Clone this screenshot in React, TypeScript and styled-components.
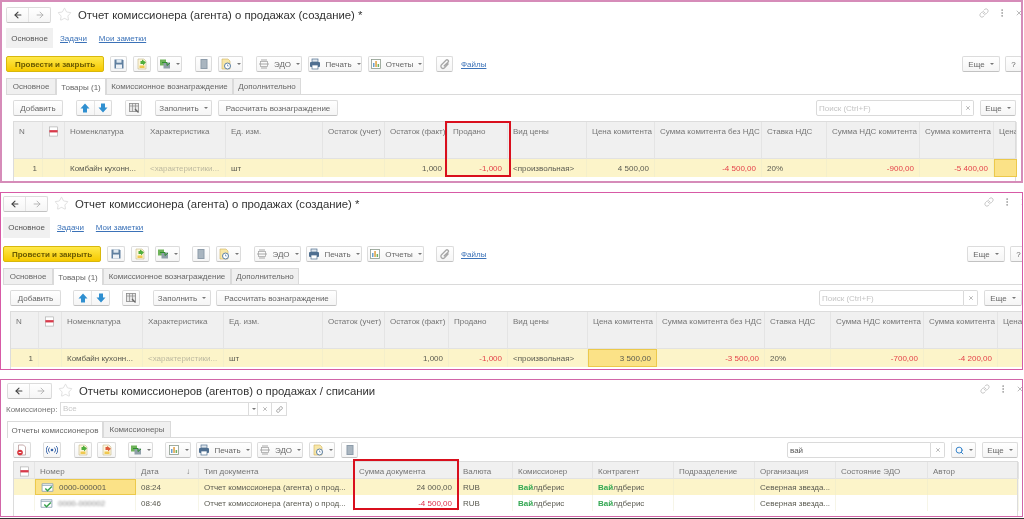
import React from "react";
import styled, { createGlobalStyle } from "styled-components";
import { ArrowLeft, ArrowRight, Star, Link as LinkIcon, MoreVertical, X, Search } from "lucide-react";

const Global = createGlobalStyle`
  html, body { margin: 0; padding: 0; background: #fff; }
  body { font-family: "Liberation Sans", Arial, sans-serif; color: #555; }
`;

const Page = styled.div`
  width: 1024px;
  height: 519px;
  overflow: hidden;
  background: #fff;
  display: flex;
  flex-direction: column;
  border-bottom: 1px solid #333;
  box-sizing: border-box;
  filter: blur(0.5px);
`;

const Panel = styled.section<{ $h: number; $mt: number; $x: number; $border: string; $top: number; $bw: number }>`
  position: relative;
  box-sizing: border-box;
  flex: none;
  width: 1023px;
  height: ${(p) => p.$h}px;
  margin-top: ${(p) => p.$mt}px;
  padding: ${(p) => p.$top}px 0 0 ${(p) => p.$x}px;
  border: ${(p) => p.$bw}px solid ${(p) => p.$border};
  overflow: hidden;
`;

const HeadRow = styled.div`
  display: flex;
  align-items: center;
  height: 15px;
  width: 1015px;
  position: relative;
`;

const Split = styled.div<{ $w: number; $ml?: number }>`
  flex: none;
  display: flex;
  box-sizing: border-box;
  width: ${(p) => p.$w}px;
  height: 16px;
  margin-left: ${(p) => p.$ml ?? 0}px;
  border: 1px solid #dcdcdc;
  border-bottom-color: #c2c2c2;
  border-radius: 2px;
  background: linear-gradient(#fff, #f5f5f5);
  & > span {
    flex: 1;
    display: flex;
    align-items: center;
    justify-content: center;
  }
  & > span + span { border-left: 1px solid #e4e4e4; }
`;

const Title = styled.h1`
  margin: 0 0 0 6px;
  font-size: 11.35px;
  font-weight: 400;
  color: #333;
  white-space: nowrap;
`;

const FavStar = styled(Star)`
  flex: none;
  margin-left: 6px;
`;

const WindowIcons = styled.div<{ $right: number }>`
  position: absolute;
  right: ${(p) => p.$right}px;
  top: 1px;
  display: flex;
  align-items: center;
  gap: 8px;
  color: #999;
`;

const SubTabs = styled.nav<{ $h: number }>`
  display: flex;
  align-items: center;
  height: ${(p) => p.$h}px;
  margin-top: 6px;
  font-size: 8px;
`;

const SubActive = styled.span`
  display: flex;
  align-items: center;
  justify-content: center;
  width: 47px;
  height: 100%;
  background: #f0f0f0;
  color: #555;
`;

const LinkText = styled.a<{ $ml: number }>`
  margin-left: ${(p) => p.$ml}px;
  color: #3b72b8;
  text-decoration: underline;
  font-size: 8px;
  white-space: nowrap;
`;

const Toolbar = styled.div<{ $w: number; $mt?: number; $ml?: number }>`
  display: flex;
  align-items: center;
  box-sizing: border-box;
  height: 16px;
  width: ${(p) => p.$w}px;
  margin-top: ${(p) => p.$mt ?? 8}px;
  margin-left: ${(p) => p.$ml ?? 0}px;
`;

const Tool = styled.button<{ $w: number; $ml?: number; $auto?: boolean }>`
  flex: none;
  display: flex;
  align-items: center;
  justify-content: center;
  gap: 4px;
  box-sizing: border-box;
  width: ${(p) => p.$w}px;
  height: 16px;
  margin: 0;
  margin-left: ${(p) => (p.$auto ? "auto" : `${p.$ml ?? 0}px`)};
  padding: 0;
  border: 1px solid #dcdcdc;
  border-bottom-color: #c2c2c2;
  border-radius: 2px;
  background: linear-gradient(#fff, #f5f5f5);
  color: #666;
  font: 400 8px "Liberation Sans", Arial, sans-serif;
  white-space: nowrap;
`;

const PrimaryBtn = styled.button`
  flex: none;
  width: 98px;
  height: 16px;
  padding: 0;
  box-sizing: border-box;
  border: 1px solid #d8b80c;
  border-radius: 2px;
  background: linear-gradient(#ffe94a, #f6c900);
  color: #6a5a00;
  font: 700 8px "Liberation Sans", Arial, sans-serif;
  white-space: nowrap;
`;

const Caret = styled.i`
  display: block;
  width: 0;
  height: 0;
  margin-left: 1px;
  border: 2px solid transparent;
  border-top: 2.5px solid #777;
  border-bottom: 0;
`;

const Tabs = styled.div<{ $mt: number }>`
  display: flex;
  height: 16px;
  margin-top: ${(p) => p.$mt}px;
  margin-right: -20px;
  border-bottom: 1px solid #dadada;
  box-sizing: content-box;
`;

const TabItem = styled.div<{ $w: number; $active?: boolean }>`
  flex: none;
  display: flex;
  align-items: center;
  justify-content: center;
  box-sizing: border-box;
  width: ${(p) => p.$w}px;
  height: ${(p) => (p.$active ? 17 : 16)}px;
  font-size: 8px;
  white-space: nowrap;
  color: #666;
  background: ${(p) => (p.$active ? "#fff" : "#f0f0f0")};
  border: 1px solid #dadada;
  border-bottom: 0;
`;

const SearchField = styled.div<{ $w: number; $ghost?: boolean }>`
  flex: none;
  display: flex;
  align-items: center;
  box-sizing: border-box;
  width: ${(p) => p.$w}px;
  height: 16px;
  margin-left: auto;
  padding-left: 2px;
  border: 1px solid #dadada;
  border-radius: 2px 0 0 2px;
  background: #fff;
  font-size: 8px;
  color: ${(p) => (p.$ghost ? "#c4c4c4" : "#555")};
`;

const ClearBtn = styled.span<{ $w: number }>`
  flex: none;
  display: flex;
  align-items: center;
  justify-content: center;
  box-sizing: border-box;
  width: ${(p) => p.$w}px;
  height: 16px;
  border: 1px solid #dadada;
  border-left: 0;
  border-radius: 0 2px 2px 0;
  color: #777;
`;

const Table = styled.div<{ $w: number; $mt: number; $ml: number }>`
  box-sizing: border-box;
  width: ${(p) => p.$w}px;
  height: 100px;
  margin-top: ${(p) => p.$mt}px;
  margin-left: ${(p) => p.$ml}px;
  border-left: 1px solid #dcdcdc;
  border-right: 1px solid #dcdcdc;
  border-top: 1px solid #dcdcdc;
`;

const GridRow = styled.div<{ $cols: string; $h: number; $bg: string }>`
  display: grid;
  grid-template-columns: ${(p) => p.$cols};
  height: ${(p) => p.$h}px;
  background: ${(p) => p.$bg};
  font-size: 8px;
`;

const HeadCell = styled.div`
  box-sizing: border-box;
  padding: 4px 0 0 5px;
  border-right: 1px solid #e4e4e4;
  border-bottom: 1px solid #e2e2e2;
  line-height: 11px;
  color: #757575;
  white-space: nowrap;
  overflow: hidden;
  display: flex;
  justify-content: space-between;
  align-items: flex-start;
`;

const Cell = styled.div<{ $right?: boolean; $color?: string; $focus?: boolean }>`
  box-sizing: border-box;
  display: flex;
  align-items: center;
  gap: 5px;
  justify-content: ${(p) => (p.$right ? "flex-end" : "flex-start")};
  padding: 0 5px;
  white-space: nowrap;
  overflow: hidden;
  color: ${(p) => p.$color ?? "#5a5a50"};
  background: ${(p) => (p.$focus ? "#fbe287" : "transparent")};
  border: ${(p) => (p.$focus ? "1px solid #ecc94b" : "0")};
  border-right: ${(p) => (p.$focus ? "1px solid #ecc94b" : "1px solid rgba(235,232,205,.45)")};
`;

const Match = styled.b`
  color: #34a853;
  font-weight: 700;
`;

const Smudged = styled.span`
  filter: blur(1.1px);
  color: #888;
`;

const FilterRow = styled.div`
  display: flex;
  align-items: center;
  height: 14px;
  margin-top: 4px;
  margin-left: -1px;
  font-size: 8px;
  color: #777;
`;

const FilterLabel = styled.span`
  flex: none;
  width: 54px;
`;

const FilterInput = styled.div`
  box-sizing: border-box;
  width: 189px;
  height: 14px;
  padding-left: 2px;
  border: 1px solid #dcdcdc;
  line-height: 12px;
  color: #c8c8c8;
`;

const FilterBtn = styled.span<{ $w: number }>`
  display: flex;
  align-items: center;
  justify-content: center;
  box-sizing: border-box;
  width: ${(p) => p.$w}px;
  height: 14px;
  border: 1px solid #dcdcdc;
  border-left: 0;
  color: #777;
`;

const RedBox = styled.div<{ $x: number; $y: number; $w: number; $h: number }>`
  position: absolute;
  left: ${(p) => p.$x}px;
  top: ${(p) => p.$y}px;
  width: ${(p) => p.$w}px;
  height: ${(p) => p.$h}px;
  box-sizing: border-box;
  border: 2px solid #d90f1d;
  pointer-events: none;
`;

const DateSort = styled.span`
  margin-right: 8px;
`;

const Svg = ({ children, s = 12 }: { children: React.ReactNode; s?: number }) => (
  <svg width={s} height={s} viewBox="0 0 12 12" fill="none">{children}</svg>
);

const icons: Record<string, React.ReactNode> = {
  save: (
    <Svg>
      <path d="M1.5 1.5h8l1 1v8h-9z" fill="#5f7f9f" />
      <rect x="3.5" y="1.5" width="5" height="3.2" fill="#dfe8f0" />
      <rect x="3" y="6.5" width="6" height="4" fill="#eef2f6" />
    </Svg>
  ),
  docGreen: (
    <Svg>
      <path d="M2 1h6l2 2v8H2z" fill="#fdf6da" stroke="#c7b98a" strokeWidth=".6" />
      <path d="M6 1.5l4 2.8L7 7.500V6H4.500V3H6z" fill="#4fae3c" />
      <rect x="3.500" y="7.500" width="5" height="2.500" fill="#f0c850" />
    </Svg>
  ),
  docRed: (
    <Svg>
      <path d="M2 1h6l2 2v8H2z" fill="#fdf6da" stroke="#c7b98a" strokeWidth=".6" />
      <path d="M6 2l4 2.800L7 7.500V6H4.500V3H6z" fill="#dd5a3a" />
      <rect x="3.500" y="7.500" width="5" height="2.500" fill="#f0c850" />
    </Svg>
  ),
  group: (
    <Svg>
      <rect x="1" y="1.500" width="6" height="6" fill="#6fb35a" />
      <rect x="4.500" y="4.500" width="6.500" height="6" fill="#8f9fa8" />
      <path d="M3 4.500h5v3l3-2.500" stroke="#2e8f2e" strokeWidth="1" />
    </Svg>
  ),
  list: (
    <Svg>
      <rect x="2.500" y="1" width="7" height="10" fill="#8d9caa" />
      <path d="M3.500 3h5M3.500 5h5M3.500 7h5M3.500 9h5" stroke="#dfe5ea" strokeWidth=".7" />
    </Svg>
  ),
  clock: (
    <Svg>
      <path d="M2 1h6l2 2v8H2z" fill="#f8e7a8" stroke="#d0b460" strokeWidth=".6" />
      <circle cx="7.500" cy="8" r="3" fill="#fff" stroke="#5b7fa5" />
      <path d="M7.500 6.500V8h1.200" stroke="#5b7fa5" strokeWidth=".7" />
    </Svg>
  ),
  edo: (
    <Svg>
      <path d="M3 2h6M1 6h10M3 10h6" stroke="#a8a8a8" strokeWidth="1" />
      <rect x="2.500" y="3.500" width="7" height="5" stroke="#a8a8a8" strokeWidth=".8" />
    </Svg>
  ),
  print: (
    <Svg>
      <rect x="3" y="1" width="6" height="3" fill="#dfe5ec" stroke="#4f6f90" strokeWidth=".7" />
      <rect x="1" y="4" width="10" height="5" rx="1" fill="#4f6f90" />
      <rect x="3" y="7" width="6" height="4" fill="#fff" stroke="#4f6f90" strokeWidth=".7" />
    </Svg>
  ),
  report: (
    <Svg>
      <rect x="1.500" y="1.500" width="9" height="9" fill="#fff" stroke="#8a9a8a" strokeWidth=".8" />
      <rect x="3" y="5" width="1.500" height="4" fill="#6a9fd0" />
      <rect x="5.300" y="3" width="1.500" height="6" fill="#e0a040" />
      <rect x="7.600" y="6" width="1.500" height="3" fill="#70b060" />
    </Svg>
  ),
  clip: (
    <Svg>
      <path d="M9.500 5.500L5.500 9.700a2 2 0 01-3-3L7 2.200a1.300 1.300 0 012 2L4.800 8.300" stroke="#a8a8a8" strokeWidth="1.300" />
    </Svg>
  ),
  table: (
    <Svg>
      <rect x="1.500" y="1.500" width="9" height="8" fill="#e8e8e8" stroke="#888" strokeWidth=".8" />
      <path d="M1.500 4h9M4.500 1.500v8M7.500 1.500v8" stroke="#888" strokeWidth=".7" />
      <path d="M7 7l3.500 3.500" stroke="#666" strokeWidth="1.200" />
    </Svg>
  ),
  del: (
    <Svg>
      <path d="M2.500 1h5l2 2v8h-7z" fill="#fff" stroke="#b08a8a" strokeWidth=".7" />
      <circle cx="4" cy="8.500" r="2.800" fill="#d9363e" />
      <path d="M2.700 8.500h2.600" stroke="#fff" strokeWidth=".9" />
    </Svg>
  ),
  radio: (
    <Svg>
      <circle cx="6" cy="6" r="1.300" fill="#3461a8" />
      <path d="M3.500 3.500a3.500 3.500 0 000 5M8.500 3.500a3.500 3.500 0 010 5M1.800 2a6 6 0 000 8M10.200 2a6 6 0 010 8" stroke="#3461a8" strokeWidth=".9" />
    </Svg>
  ),
  up: (
    <Svg>
      <path d="M6 1.500L10.500 6.500H8V10.500H4V6.500H1.500z" fill="#2f8fd0" />
    </Svg>
  ),
  down: (
    <Svg>
      <path d="M6 10.500L1.500 5.500H4V1.500H8V5.500H10.500z" fill="#2f8fd0" />
    </Svg>
  ),
  mark: (
    <Svg s={11}>
      <rect x="1.500" y="1" width="9" height="10" fill="#fff" stroke="#aaa" strokeWidth=".7" />
      <rect x="1.500" y="4.500" width="9" height="2.500" fill="#d83a4a" />
    </Svg>
  ),
  row: (
    <Svg s={13}>
      <path d="M1 2.500h10v7H1z" fill="#fff" stroke="#8fa3b2" strokeWidth=".8" />
      <path d="M1 4h10" stroke="#8fa3b2" strokeWidth=".8" />
      <path d="M4 7l2 2 4-4" stroke="#35a04a" strokeWidth="1.300" />
    </Svg>
  ),
};

type ToolDef = { w: number; ml?: number; icon?: string; label?: string; caret?: boolean; auto?: boolean };

const ToolButtons = ({ items }: { items: ToolDef[] }) => (
  <>
    {items.map((t, i) => (
      <Tool key={i} $w={t.w} $ml={t.ml} $auto={t.auto}>
        {t.icon && icons[t.icon]}
        {t.label}
        {t.caret && <Caret />}
      </Tool>
    ))}
  </>
);

const Header = ({ title, right }: { title: string; right: number }) => (
  <HeadRow>
    <Split $w={45}>
      <span><ArrowLeft size={10} strokeWidth={2.6} color="#444" /></span>
      <span><ArrowRight size={10} strokeWidth={2} color="#aaa" /></span>
    </Split>
    <FavStar size={15} strokeWidth={0.9} color="#c8c8c8" />
    <Title>{title}</Title>
    <WindowIcons $right={right}>
      <LinkIcon size={10} strokeWidth={1.3} />
      <MoreVertical size={10} strokeWidth={2} />
      <X size={8} />
    </WindowIcons>
  </HeadRow>
);

const SearchBox = ({ text, w, cw, ghost }: { text: string; w: number; cw: number; ghost?: boolean }) => (
  <>
    <SearchField $w={w} $ghost={ghost}>{text}</SearchField>
    <ClearBtn $w={cw}><X size={6} strokeWidth={2} /></ClearBtn>
  </>
);

const RED = "#e4424a";

type RowCell = { t?: React.ReactNode; right?: boolean; color?: string; focus?: boolean };

const DocTable = ({ cols, heads, rows, headH, rowH, w, mt, ml }: {
  cols: number[]; heads: React.ReactNode[]; rows: { bg: string; cells: RowCell[] }[]; headH: number; rowH: number; w: number; mt: number; ml: number;
}) => {
  const tpl = cols.map((c) => `${c}px`).join(" ");
  return (
    <Table $w={w} $mt={mt} $ml={ml}>
      <GridRow $cols={tpl} $h={headH} $bg="#f0f0f0">
        {heads.map((h, i) => <HeadCell key={i}>{h}</HeadCell>)}
      </GridRow>
      {rows.map((r, ri) => (
        <GridRow key={ri} $cols={tpl} $h={rowH} $bg={r.bg}>
          {r.cells.map((c, i) => (
            <Cell key={i} $right={c.right} $color={c.color} $focus={c.focus}>{c.t}</Cell>
          ))}
        </GridRow>
      ))}
    </Table>
  );
};

const docHeads: React.ReactNode[] = [
  "N", <>{icons.mark}</>, "Номенклатура", "Характеристика", "Ед. изм.", "Остаток (учет)", "Остаток (факт)", "Продано",
  "Вид цены", "Цена комитента", "Сумма комитента без НДС", "Ставка НДС", "Сумма НДС комитента", "Сумма комитента", "Цена",
];

const docRow = (price: string, sum: string, vat: string, total: string, priceFocus: boolean, lastFocus: boolean): RowCell[] => [
  { t: "1", right: true }, {}, { t: "Комбайн кухонн..." }, { t: "<характеристики...", color: "#bdb9a0" }, { t: "шт" }, {},
  { t: "1,000", right: true }, { t: "-1,000", right: true, color: RED }, { t: "<произвольная>" },
  { t: price, right: true, focus: priceFocus }, { t: sum, right: true, color: RED }, { t: "20%" },
  { t: vat, right: true, color: RED }, { t: total, right: true, color: RED }, { focus: lastFocus },
];

const listHeads: React.ReactNode[] = [
  <>{icons.mark}</>, "Номер", <>Дата<DateSort>↓</DateSort></>, "Тип документа", "Сумма документа", "Валюта", "Комиссионер", "Контрагент",
  "Подразделение", "Организация", "Состояние ЭДО", "Автор",
];

const Wb = () => <span><Match>Вай</Match>лдберис</span>;

const listRow = (num: React.ReactNode, time: string, sum: string, color: string | undefined, focus: boolean): RowCell[] => [
  {}, { t: <>{icons.row}{num}</>, focus }, { t: time }, { t: "Отчет комиссионера (агента) о прод..." },
  { t: sum, right: true, color }, { t: "RUB" }, { t: <Wb /> }, { t: <Wb /> }, {}, { t: "Северная звезда..." }, {}, {},
];

const DocPanel = (p: {
  h: number; mt: number; x: number; top: number; bw: number; border: string; subH: number; right: number; topW: number;
  tools: ToolDef[]; eshe: ToolDef[]; searchW: number; clearW: number; moreW: number;
  tbW: number; cols: number[]; tableW: number; price: string; sum: string; vat: string; total: string;
  priceFocus: boolean; lastFocus: boolean; tabs: number[]; fileMl: number; arrowsW: number; arrowsMl: number; addW: number; after: ToolDef[]; children?: React.ReactNode;
}) => (
  <Panel $h={p.h} $mt={p.mt} $x={p.x} $top={p.top} $border={p.border} $bw={p.bw}>
    <Header title="Отчет комиссионера (агента) о продажах (создание) *" right={p.right} />
    <SubTabs $h={p.subH}>
      <SubActive>Основное</SubActive>
      <LinkText $ml={7}>Задачи</LinkText>
      <LinkText $ml={12}>Мои заметки</LinkText>
    </SubTabs>
    <Toolbar $w={p.topW}>
      <PrimaryBtn>Провести и закрыть</PrimaryBtn>
      <ToolButtons items={p.tools} />
      <LinkText $ml={p.fileMl}>Файлы</LinkText>
      <ToolButtons items={p.eshe} />
    </Toolbar>
    <Tabs $mt={6}>
      <TabItem $w={p.tabs[0]}>Основное</TabItem>
      <TabItem $w={p.tabs[1]} $active>Товары (1)</TabItem>
      <TabItem $w={p.tabs[2]}>Комиссионное вознаграждение</TabItem>
      <TabItem $w={p.tabs[3]}>Дополнительно</TabItem>
    </Tabs>
    <Toolbar $w={p.tbW} $mt={5} $ml={7}>
      <Tool $w={p.addW}>Добавить</Tool>
      <Split $w={p.arrowsW} $ml={p.arrowsMl}>
        <span>{icons.up}</span>
        <span>{icons.down}</span>
      </Split>
      <ToolButtons items={p.after} />
      <SearchBox text="Поиск (Ctrl+F)" w={p.searchW} cw={p.clearW} ghost />
      <Tool $w={p.moreW} $ml={6}>Еще<Caret /></Tool>
    </Toolbar>
    <DocTable
      cols={p.cols}
      heads={docHeads}
      headH={37}
      rowH={18}
      w={p.tableW}
      mt={5}
      ml={7}
      rows={[{ bg: "#fcf4c9", cells: docRow(p.price, p.sum, p.vat, p.total, p.priceFocus, p.lastFocus) }]}
    />
    {p.children}
  </Panel>
);

export default function App() {
  return (
    <Page>
      <Global />
      <DocPanel
        h={183} mt={0} x={4} top={5} bw={2} border="#d68cb9" subH={20} right={-2} topW={1016}
        tools={[
          { w: 17, ml: 6, icon: "save" }, { w: 18, ml: 6, icon: "docGreen" }, { w: 25, ml: 6, icon: "group", caret: true },
          { w: 17, ml: 13, icon: "list" }, { w: 25, ml: 6, icon: "clock", caret: true },
          { w: 46, ml: 13, icon: "edo", label: "ЭДО", caret: true }, { w: 54, ml: 6, icon: "print", label: "Печать", caret: true },
          { w: 56, ml: 6, icon: "report", label: "Отчеты", caret: true }, { w: 17, ml: 12, icon: "clip" },
        ]}
        fileMl={8}
        eshe={[{ w: 38, auto: true, label: "Еще", caret: true }, { w: 17, ml: 5, label: "?" }]}
        tabs={[50, 50, 127, 68]}
        tbW={1003} addW={50} arrowsW={36} arrowsMl={13}
        after={[{ w: 17, ml: 13, icon: "table" }, { w: 57, ml: 13, label: "Заполнить", caret: true }, { w: 120, ml: 6, label: "Рассчитать вознаграждение" }]}
        searchW={146} clearW={12} moreW={36}
        cols={[29, 22, 80, 81, 97, 62, 63, 60, 79, 68, 107, 65, 93, 74, 23]} tableW={1003}
        price="4 500,00" sum="-4 500,00" vat="-900,00" total="-5 400,00" priceFocus={false} lastFocus
      >
        <RedBox $x={443} $y={119} $w={66} $h={56} />
      </DocPanel>
      <DocPanel
        h={178} mt={9} x={2} top={3} bw={1} border="#d75aa6" subH={21} right={-10} topW={1024}
        tools={[
          { w: 18, ml: 6, icon: "save" }, { w: 18, ml: 6, icon: "docGreen" }, { w: 25, ml: 6, icon: "group", caret: true },
          { w: 18, ml: 12, icon: "list" }, { w: 25, ml: 6, icon: "clock", caret: true },
          { w: 47, ml: 13, icon: "edo", label: "ЭДО", caret: true }, { w: 56, ml: 5, icon: "print", label: "Печать", caret: true },
          { w: 57, ml: 5, icon: "report", label: "Отчеты", caret: true }, { w: 18, ml: 12, icon: "clip" },
        ]}
        fileMl={7}
        eshe={[{ w: 38, auto: true, label: "Еще", caret: true }, { w: 17, ml: 5, label: "?" }]}
        tabs={[50, 50, 128, 68]}
        tbW={1012} addW={51} arrowsW={37} arrowsMl={12}
        after={[{ w: 18, ml: 12, icon: "table" }, { w: 58, ml: 13, label: "Заполнить", caret: true }, { w: 121, ml: 5, label: "Рассчитать вознаграждение" }]}
        searchW={145} clearW={14} moreW={38}
        cols={[28, 23, 81, 81, 99, 62, 64, 59, 80, 69, 108, 66, 93, 74, 30]} tableW={1020}
        price="3 500,00" sum="-3 500,00" vat="-700,00" total="-4 200,00" priceFocus lastFocus={false}
      />
      <Panel $h={138} $mt={9} $x={6} $top={3} $bw={1} $border="#d266a8">
        <Header title="Отчеты комиссионеров (агентов) о продажах / списании" right={-2} />
        <FilterRow>
          <FilterLabel>Комиссионер:</FilterLabel>
          <FilterInput>Все</FilterInput>
          <FilterBtn $w={9}><Caret /></FilterBtn>
          <FilterBtn $w={14}><X size={6} strokeWidth={2} /></FilterBtn>
          <FilterBtn $w={15}><LinkIcon size={7} /></FilterBtn>
        </FilterRow>
        <Tabs $mt={5}>
          <TabItem $w={96} $active>Отчеты комиссионеров</TabItem>
          <TabItem $w={68}>Комиссионеры</TabItem>
        </Tabs>
        <Toolbar $w={1005} $mt={4} $ml={6}>
          <ToolButtons items={[
            { w: 18, icon: "del" }, { w: 18, ml: 12, icon: "radio" }, { w: 18, ml: 13, icon: "docGreen" }, { w: 19, ml: 5, icon: "docRed" },
            { w: 25, ml: 12, icon: "group", caret: true }, { w: 26, ml: 12, icon: "report", caret: true },
            { w: 56, ml: 5, icon: "print", label: "Печать", caret: true }, { w: 46, ml: 5, icon: "edo", label: "ЭДО", caret: true },
            { w: 26, ml: 6, icon: "clock", caret: true }, { w: 17, ml: 6, icon: "list" },
          ]} />
          <SearchBox text="вай" w={144} cw={14} />
          <Tool $w={25} $ml={6}><Search size={9} strokeWidth={2.6} color="#2f7fc8" /><Caret /></Tool>
          <Tool $w={36} $ml={6}>Еще<Caret /></Tool>
        </Toolbar>
        <DocTable
          cols={[21, 101, 63, 155, 104, 55, 80, 81, 81, 81, 92, 91]}
          heads={listHeads}
          headH={17}
          rowH={16}
          w={1005}
          mt={3}
          ml={6}
          rows={[
            { bg: "#fcf4c9", cells: listRow("0000-000001", "08:24", "24 000,00", undefined, true) },
            { bg: "#fff", cells: listRow(<Smudged>0000-000002</Smudged>, "08:46", "-4 500,00", "#dc2f4a", false) },
          ]}
        />
        <RedBox $x={352} $y={79} $w={106} $h={51} />
      </Panel>
    </Page>
  );
}
